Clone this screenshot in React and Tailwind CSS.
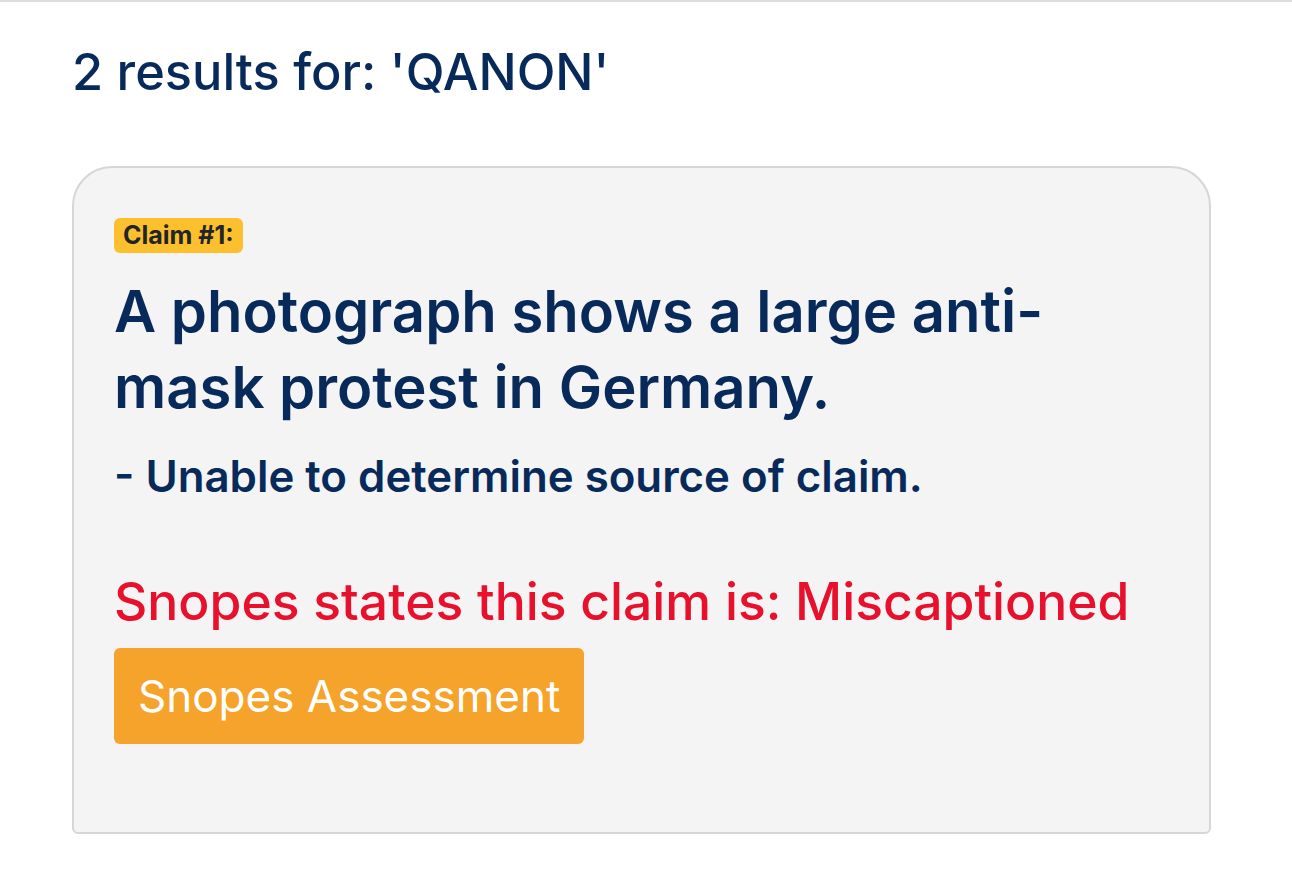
import React from "react";

function ClaimCard() {
    return (
        <div className="w-[1139px] bg-[#f4f4f4] border-2 border-[#d6d6d6] rounded-tl-[40px] rounded-tr-[40px] rounded-bl-[6px] rounded-br-[6px] pl-[40px] pr-[40px] pt-[50px] pb-[88px]">
            <span className="inline-block bg-[#fcbf2e] text-[#212529] text-[25px] font-bold leading-[35px] px-[9px] rounded-[6px]">
                Claim #1:
            </span>
            <h2 className="mt-[20px] text-[58px] font-semibold leading-[76px] text-[#072a5b] w-[960px]">
                A photograph shows a large anti-mask protest in Germany.
            </h2>
            <p className="mt-[24px] text-[43.8px] font-semibold leading-[56px] text-[#072a5b]">
                - Unable to determine source of claim.
            </p>
            <p className="mt-[64px] text-[51.6px] font-medium leading-[64px] text-[#e8112d]">
                Snopes states this claim is: Miscaptioned
            </p>
            <button className="mt-[15px] h-[96px] px-[24px] bg-[#f5a32b] text-white text-[44px] rounded-[6px]">
                Snopes Assessment
            </button>
        </div>
    );
}

export default function App() {
    return (
        <div className="min-h-[870px] bg-white border-t-2 border-[#dddddd] font-['Inter',sans-serif]">
            <div className="pl-[72px] pt-[36px]">
                <h1 className="text-[50.5px] font-medium leading-[68px] text-[#072a5b]">
                    2 results for: 'QANON'
                </h1>
                <div className="mt-[60px]">
                    <ClaimCard />
                </div>
            </div>
        </div>
    );
}
